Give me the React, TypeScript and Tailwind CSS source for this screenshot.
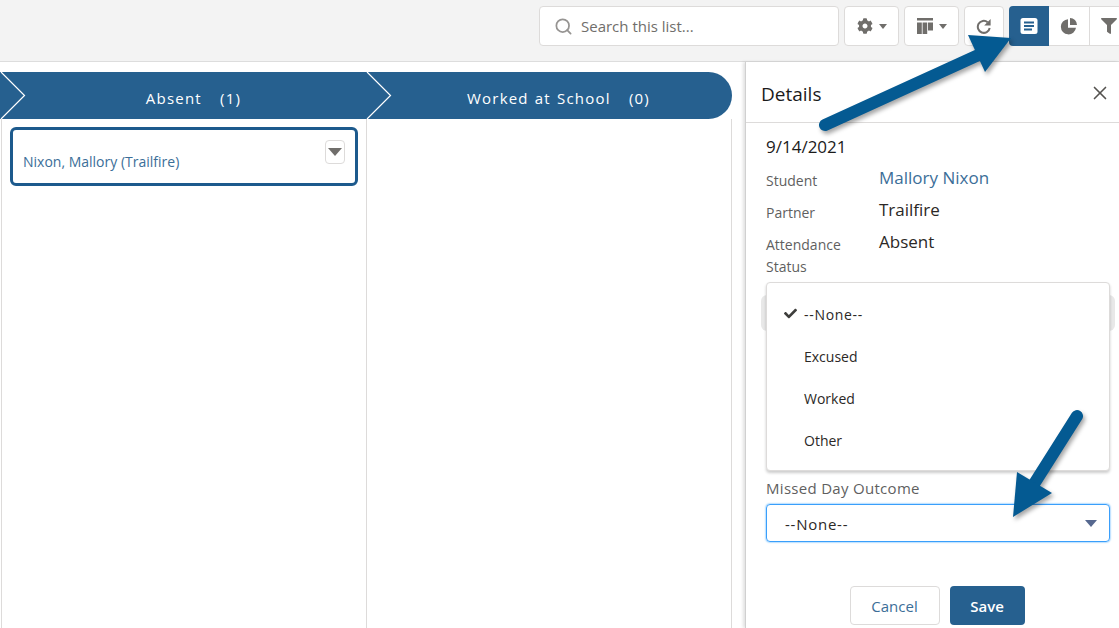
import React from 'react';
import { Search, X } from 'lucide-react';
import { FaCog, FaCheck, FaFilter } from 'react-icons/fa';

const Caret = () => (
  <svg width="8" height="5" viewBox="0 0 8 5" className="ml-[6px]">
    <path d="M0 0h8L4 5z" fill="#706e6b" />
  </svg>
);

const ToolButton: React.FC<{ className: string; children: React.ReactNode }> = ({ className, children }) => (
  <div className={`h-10 flex items-center justify-center bg-white border border-[#dddbda] rounded ${className}`}>
    {children}
  </div>
);

const Chevron: React.FC<{ className: string }> = ({ className }) => (
  <svg width="26" height="47" viewBox="0 0 26 47" className={`absolute top-0 ${className}`}>
    <path d="M1 0 L24.5 23.5 L1 47" fill="none" stroke="#fff" strokeWidth="1.2" />
  </svg>
);

const Field: React.FC<{ label: React.ReactNode; children: React.ReactNode; className?: string }> = ({ label, children, className }) => (
  <div className={`flex ${className ?? ''}`}>
    <div className="w-[113px] text-[14px] leading-[22px] text-[#5f5f5f] pt-[3px]">{label}</div>
    <div className="text-[17px] leading-[22px]">{children}</div>
  </div>
);

export default function App() {
  return (
    <div className="relative w-[1119px] h-[628px] overflow-hidden bg-white font-['Open_Sans',sans-serif] text-[#2b2826]">
      {/* Toolbar */}
      <div className="h-[62px] bg-[#f3f3f3] border-b border-[#dddddd] flex items-start pt-[6px] pl-[539px] gap-[5px]">
        <div className="w-[300px] h-10 bg-white border border-[#dddbda] rounded flex items-center pl-[14px] gap-[8px] text-[#706e6b] text-[15px] shrink-0">
          <Search className="w-[19px] h-[19px] text-[#969492]" strokeWidth={2.2} />
          <span>Search this list...</span>
        </div>
        <ToolButton className="w-[55px] shrink-0">
          <FaCog className="w-[16px] h-[16px] text-[#706e6b]" />
          <Caret />
        </ToolButton>
        <ToolButton className="w-[55px] shrink-0">
          <svg width="16" height="16" viewBox="0 0 16 16">
            <path d="M0 0h16v2.5H0zM0 4.5h4.8V16H0zM5.6 4.5h4.6V16H5.6zM11 4.5h5v8H11z" fill="#706e6b" />
          </svg>
          <Caret />
        </ToolButton>
        <ToolButton className="w-10 shrink-0">
          <svg width="16" height="16" viewBox="0 0 16 16">
            <path d="M11.6 4.2A6 6 0 1 0 13.7 10" fill="none" stroke="#706e6b" strokeWidth="2" />
            <path d="M14.6 1v6.4H8.2z" fill="#706e6b" />
          </svg>
        </ToolButton>
        <div className="flex shrink-0">
          <div className="w-10 h-10 bg-[#26608f] rounded-l flex items-center justify-center">
            <svg width="18" height="16" viewBox="0 0 18 16">
              <rect x="0.5" y="0" width="17" height="16" rx="2.5" fill="#fff" />
              <path d="M4 3.6h10v1.8H4zM4 7.1h10v1.8H4zM4 10.6h8v1.8H4z" fill="#26608f" />
            </svg>
          </div>
          <div className="w-10 h-10 bg-white border-y border-[#dddbda] flex items-center justify-center">
            <svg width="18" height="18" viewBox="0 0 18 18">
              <path d="M8 2.2a7.6 7.6 0 1 0 8 8.6H8z M10 1a7 7 0 0 1 7 7h-7z" fill="#706e6b" />
            </svg>
          </div>
          <div className="w-10 h-10 bg-white border border-[#dddbda] flex items-center justify-center">
            <FaFilter className="w-[16px] h-[16px] text-[#706e6b]" />
          </div>
        </div>
      </div>

      <div className="flex h-[566px]">
        {/* Board */}
        <div className="w-[745px] shrink-0 pt-[10px]">
          <div className="relative w-[732px] h-[47px] bg-[#26608f] rounded-r-[24px] flex text-white text-[15px] tracking-[1.2px] [word-spacing:1px] overflow-hidden">
            <Chevron className="left-0" />
            <Chevron className="left-[366px]" />
            <div className="w-[366px] pl-[21px] pt-[15px] text-center whitespace-pre">Absent   (1)</div>
            <div className="w-[366px] pl-[19px] pt-[15px] text-center whitespace-pre">Worked at School   (0)</div>
          </div>
          <div className="flex w-[732px] h-[509px]">
            <div className="w-[366px] ml-[1px] border-l border-r border-[#dddbda] pt-[8px] pl-[8px] pr-[8px]">
              <div className="relative h-[59px] border-[3px] border-[#1d5a8d] rounded-[6px] pl-[10px] pt-[22px] text-[14px] leading-[20px] text-[#3b6e98]">
                Nixon, Mallory (Trailfire)
                <div className="absolute right-[10px] top-[10px] w-5 h-6 border border-[#dddbda] rounded flex items-center justify-center">
                  <svg width="14" height="8" viewBox="0 0 14 8">
                    <path d="M0 0h14L7 8z" fill="#706e6b" />
                  </svg>
                </div>
              </div>
            </div>
            <div className="w-[365px] border-r border-[#dddbda]" />
          </div>
        </div>

        {/* Details panel */}
        <div className="relative flex-1 border-l border-[#d0d0d0] shadow-[-2px_0_3px_rgba(0,0,0,0.12)] flex flex-col">
          <div className="h-[61px] border-b border-[#dddbda] flex items-center justify-between pl-[15px] pr-[8px] pt-[5px] shrink-0">
            <span className="text-[19px] text-[#1b1b1b]">Details</span>
            <X className="w-[22px] h-[22px] -mt-[4px] text-[#54524f]" strokeWidth={1.8} />
          </div>
          <div className="pl-[20px] pr-[9px]">
            <div className="text-[17px] leading-[22px] text-[#1b1b1b] pt-[13px]">9/14/2021</div>
            <Field className="mt-[9px]" label="Student"><span className="text-[#3b6e98]">Mallory Nixon</span></Field>
            <Field className="mt-[8px] [&>div:first-child]:pt-[2px] [&>div:last-child]:-mt-[1px]" label="Partner">Trailfire</Field>
            <Field className="mt-[10px] [&>div:first-child]:pt-0 [&>div:last-child]:-mt-[3px]" label={<>Attendance<br />Status</>}>Absent</Field>
            <div className="mt-[17px] -mx-[5px] h-[36px] rounded-[6px] bg-[#e8e8e8]" />
            <div className="mt-[147px] text-[15px] leading-[20px] tracking-[0.02em] text-[#5f5f5f]">Missed Day Outcome</div>
            <div className="mt-[6px] h-[38px] border border-[#3a9ffb] rounded-[4px] shadow-[0_0_2px_#1b96ff] flex items-center justify-between pl-[18px] pr-[12px] pt-[2px] text-[15px]">
              <span className="tracking-[0.05em]">--None--</span>
              <svg width="12" height="7" viewBox="0 0 12 7" className="-mt-[2px]">
                <path d="M0 0h12L6 7z" fill="#56688f" />
              </svg>
            </div>
            <div className="mt-[44px] flex justify-center gap-[10px] pr-[2px] text-[15px]">
              <div className="w-[90px] h-[39px] pt-[1px] border border-[#dddbda] rounded-[4px] flex items-center justify-center text-[#3b6e98]">Cancel</div>
              <div className="w-[75px] h-[39px] pt-[1px] bg-[#26608f] rounded-[4px] flex items-center justify-center text-white font-semibold">Save</div>
            </div>
          </div>

          {/* Open dropdown */}
          <div className="absolute left-[20px] top-[220px] w-[344px] h-[189px] bg-white border border-[#dddbda] rounded-[4px] shadow-[0_2px_3px_rgba(0,0,0,0.2)] py-[10px] text-[14px] text-[#2b2826]">
            <div className="relative h-[42px] pl-[37px] flex items-center">
              <FaCheck className="absolute left-[17px] top-[14px] w-[13px] h-[13px] text-[#3e3e3c]" />
              <span className="tracking-[0.05em]">--None--</span>
            </div>
            <div className="h-[42px] pl-[37px] flex items-center">Excused</div>
            <div className="h-[42px] pl-[37px] flex items-center">Worked</div>
            <div className="h-[42px] pl-[37px] flex items-center">Other</div>
          </div>
        </div>
      </div>

      {/* Annotation arrows */}
      <svg width="1119" height="628" viewBox="0 0 1119 628" className="absolute inset-0 pointer-events-none drop-shadow-[2px_3px_2px_rgba(0,0,0,0.35)]">
        <path d="M825 125 L985 52" stroke="#045a92" strokeWidth="12" strokeLinecap="round" fill="none" />
        <path d="M1011 38 L968 35 L985 72 Z" fill="#045a92" />
        <path d="M1077 416 L1034 484" stroke="#045a92" strokeWidth="12" strokeLinecap="round" fill="none" />
        <path d="M1013 517 L1017 472 L1052 493 Z" fill="#045a92" />
      </svg>
    </div>
  );
}
